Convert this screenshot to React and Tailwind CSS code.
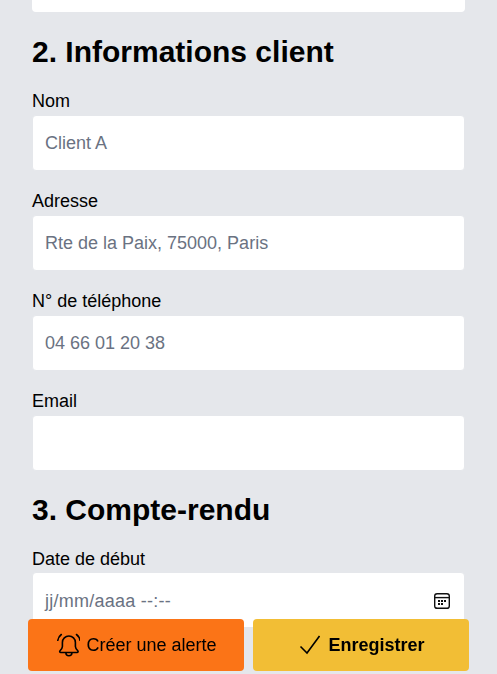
import React from 'react'

const font = { fontFamily: '"Liberation Sans", Arial, sans-serif' }

function Field({ label, placeholder }) {
  return (
    <div className="mb-5">
      <label className="mb-1 block text-lg leading-5 text-black">{label}</label>
      <input
        className="block w-full h-14 rounded bg-white border border-gray-200 px-3 text-lg text-black placeholder:text-gray-500 outline-none"
        placeholder={placeholder}
      />
    </div>
  )
}

function CalendarIcon() {
  return (
    <svg width="18" height="18" viewBox="0 0 18 18" fill="none" stroke="#111" strokeWidth="1.4">
      <rect x="1.7" y="1.7" width="14.6" height="14.6" rx="2.4" />
      <path d="M2 5.6h14" />
      <g fill="#111" stroke="none">
        <rect x="5" y="8" width="2" height="2" />
        <rect x="8" y="8" width="2" height="2" />
        <rect x="11" y="8" width="2" height="2" />
        <rect x="5" y="11" width="2" height="2" />
        <rect x="8" y="11" width="2" height="2" />
      </g>
    </svg>
  )
}

function BellIcon() {
  return (
    <svg width="25" height="25" viewBox="0 0 25 25" fill="none" stroke="#000" strokeWidth="1.6" strokeLinecap="round" strokeLinejoin="round">
      <g transform="translate(2.4 0.5)">
        <path d="M5 13V9a6.5 6.5 0 0 1 13 0v4c0 1.8 1.2 3 2.4 4.2.7.7.2 1.8-.8 1.8H3.4c-1 0-1.5-1.1-.8-1.8C3.8 16 5 14.8 5 13z" />
        <path d="M8.5 19.2a3 3 0 0 0 6 0" />
        <path d="M.4 6.8C.8 4.5 2 2.4 3.9 1" />
        <path d="M22.6 6.8C22.2 4.5 21 2.4 19.1 1" />
      </g>
    </svg>
  )
}

function CheckIcon() {
  return (
    <svg width="24" height="20" viewBox="0 0 24 20" fill="none" stroke="#000" strokeWidth="1.6">
      <path d="M4.5 11.5l6.5 6.5L23.5 1" />
    </svg>
  )
}

export default function App() {
  return (
    <div className="h-[674px] overflow-hidden bg-gray-200 px-8" style={font}>
      <div className="h-3 rounded-b bg-white" />

      <h2 className="mt-[22px] mb-[21px] text-3xl leading-9 font-bold text-black">2. Informations client</h2>
      <Field label="Nom" placeholder="Client A" />
      <Field label="Adresse" placeholder="Rte de la Paix, 75000, Paris" />
      <Field label="N° de téléphone" placeholder="04 66 01 20 38" />
      <Field label="Email" placeholder="" />

      <h2 className="mt-[21px] mb-[21px] text-3xl leading-9 font-bold text-black">3. Compte-rendu</h2>
      <div>
        <label className="mb-[3px] block text-lg leading-5 text-black">Date de début</label>
        <div className="flex h-14 items-center justify-between rounded bg-white border border-gray-200 pl-3 pr-[13px] pt-0.5 text-lg text-gray-500">
          <span className="tracking-[0.25px]">jj/mm/aaaa --:--</span>
          <CalendarIcon />
        </div>
      </div>

      <div className="fixed bottom-[3px] left-0 right-0 flex gap-[8.5px] pl-7 pr-[28.5px]">
        <button className="flex h-[52px] flex-1 items-center justify-center gap-1.5 rounded bg-[#fb7417] text-lg text-black">
          <BellIcon />
          Créer une alerte
        </button>
        <button className="flex h-[52px] flex-1 items-center justify-center gap-2 rounded bg-[#f2be35] text-lg font-bold text-black">
          <CheckIcon />
          Enregistrer
        </button>
      </div>
    </div>
  )
}
